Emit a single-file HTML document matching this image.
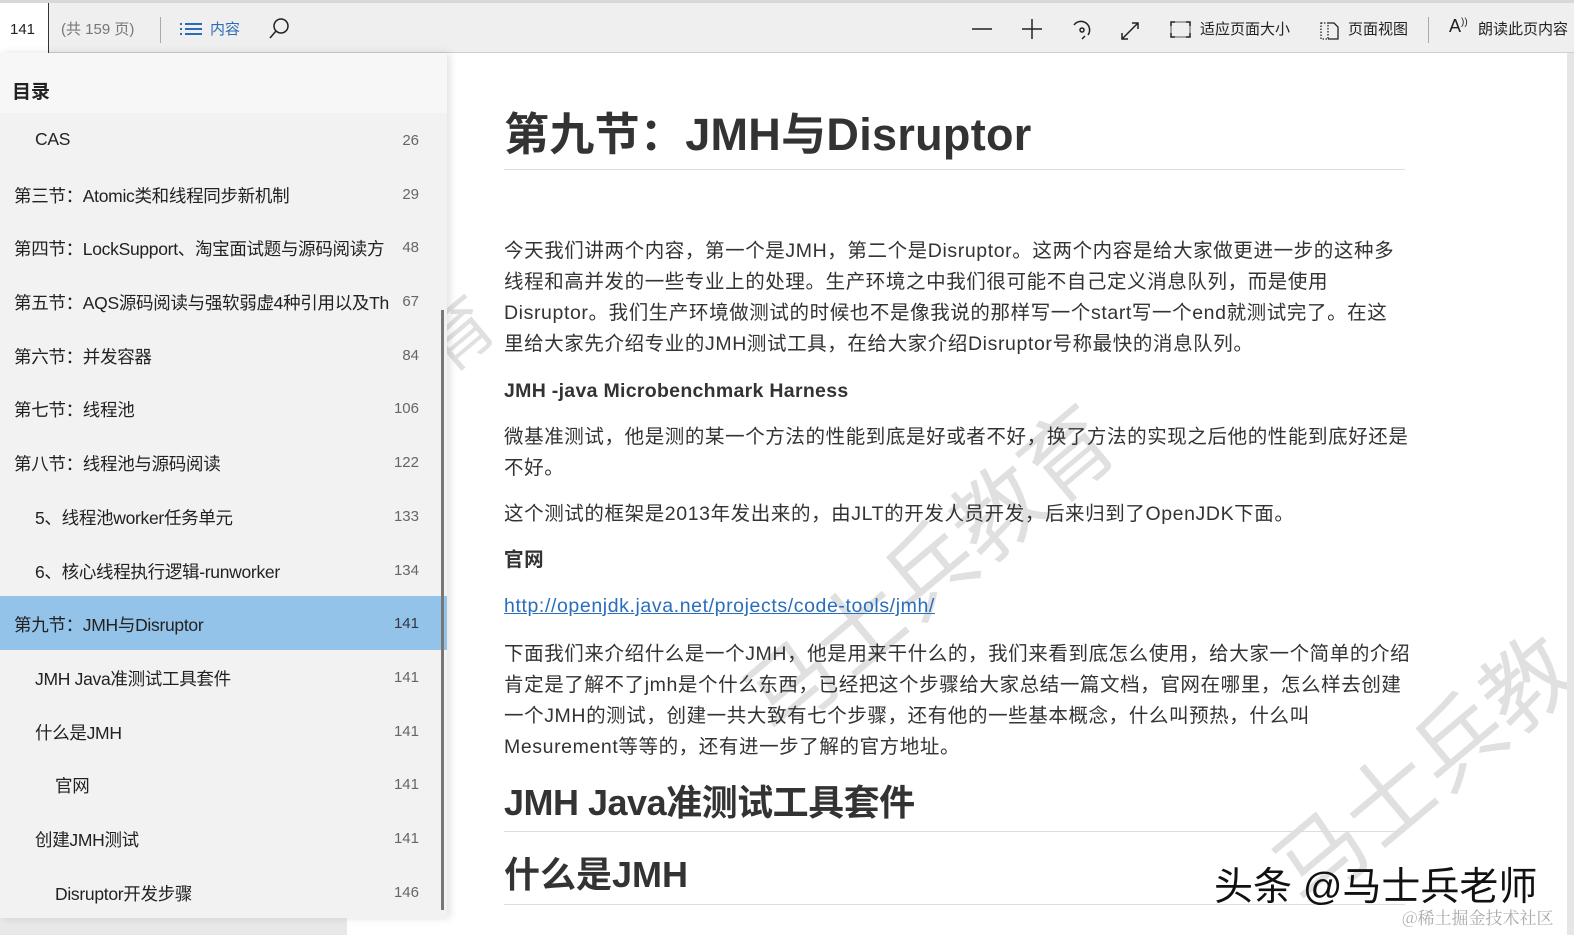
<!DOCTYPE html>
<html><head><meta charset="utf-8"><style>
*{margin:0;padding:0;box-sizing:border-box}
body{width:1574px;height:935px;overflow:hidden;background:#fff;font-family:"Liberation Sans","Noto Sans CJK SC",sans-serif;position:relative;color:#222}
.tb{position:absolute;left:0;top:0;width:1574px;height:53px;background:#efefef;border-top:3px solid #d8d8d8;border-bottom:1px solid #cfcfcf}
.tb span{position:absolute;top:15px;font-size:15px;color:#222}
.pg{position:absolute;left:0;top:0;width:49px;height:50px;background:#fff;border-right:1px solid #333;font-size:15px;padding:18px 0 0 10px}
.side{position:absolute;left:0;top:53px;width:447px;height:865px;background:#f2f2f2;box-shadow:3px 0 8px rgba(0,0,0,.12);overflow:hidden}
.side .hd{height:60px;background:#f7f7f7;font-weight:bold;font-size:19px;padding:24px 0 0 12px}
.it{height:53.7px;position:relative;font-size:17.5px;color:#222}
.it .t{position:absolute;top:16px;width:378px;overflow:hidden;white-space:nowrap;letter-spacing:-0.3px}
.it .n{position:absolute;right:28px;top:19px;font-size:15px;color:#666}
.it.sel{background:#94c3ea}
.it.sel .n{color:#334}
.sb{position:absolute;left:441px;top:257px;width:3px;height:600px;background:#777}
h1{position:absolute;left:504px;top:98px;font-size:45px;font-weight:bold;color:#333;white-space:nowrap;letter-spacing:.3px}
.hr{position:absolute;left:504px;width:901px;height:1px;background:#ddd}
.p{position:absolute;left:504px;font-size:19.5px;line-height:31px;color:#333;white-space:nowrap;letter-spacing:.6px}
.b{font-weight:bold}
.wm{position:absolute;color:#d4d4d4;font-size:90px;transform:rotate(-40deg);white-space:nowrap;opacity:.7}
</style></head><body>
<div class="wm" style="left:700px;top:500px">马士兵教育</div>
<div class="wm" style="left:1240px;top:700px">马士兵教</div>
<div class="wm" style="left:420px;top:280px;font-size:70px">育</div>
<div class="tb">
<div class="pg">141</div>
<span style="left:61px;color:#777">(共 159 页)</span>
<div style="position:absolute;left:160px;top:14px;width:1px;height:26px;background:#aaa"></div>
<svg style="position:absolute;left:180px;top:19px" width="22" height="14"><g stroke="#2b6cb5" stroke-width="2"><line x1="0" y1="2" x2="2" y2="2"/><line x1="5" y1="2" x2="22" y2="2"/><line x1="0" y1="7" x2="2" y2="7"/><line x1="5" y1="7" x2="22" y2="7"/><line x1="0" y1="12" x2="2" y2="12"/><line x1="5" y1="12" x2="22" y2="12"/></g></svg>
<span style="left:210px;color:#2b6cb5">内容</span>
<svg style="position:absolute;left:268px;top:14px" width="24" height="24"><circle cx="13" cy="9" r="7" fill="none" stroke="#222" stroke-width="1.5"/><line x1="8" y1="14" x2="2" y2="21" stroke="#222" stroke-width="1.5"/></svg>
<svg style="position:absolute;left:970px;top:14px" width="180" height="26" fill="none" stroke="#222" stroke-width="1.5"><line x1="2" y1="12" x2="22" y2="12"/><line x1="52" y1="12" x2="72" y2="12"/><line x1="62" y1="2" x2="62" y2="22"/><path d="M104 8a8 8 0 1 1 14 10"/><circle cx="112" cy="13" r="2"/><path d="M112 22l3-3"/><path d="M152 22l16-16M152 16v6h6M162 6h6v6"/></svg>
<svg style="position:absolute;left:1170px;top:18px" width="22" height="18" fill="none" stroke="#222" stroke-width="1.5"><path d="M1 5V1h4M16 1h4v4M20 12v4h-4M5 16H1v-4"/><rect x="1" y="1" width="19" height="15" stroke-width="0.7"/></svg>
<span style="left:1200px">适应页面大小</span>
<svg style="position:absolute;left:1320px;top:18px" width="22" height="20" fill="none" stroke="#222" stroke-width="1.3"><path d="M1 2h7v16H1z" stroke-dasharray="1.5 1.5"/><path d="M8 2h6l4 4v12H8"/></svg>
<span style="left:1348px">页面视图</span>
<div style="position:absolute;left:1428px;top:14px;width:1px;height:26px;background:#aaa"></div>
<span style="left:1449px;font-size:18px;top:13px">A<sup style="font-size:10px">))</sup></span>
<span style="left:1478px">朗读此页内容</span>
</div>
<div style="position:absolute;left:1567px;top:53px;width:7px;height:882px;background:#e6e6e6"></div>
<div style="position:absolute;left:0;top:918px;width:347px;height:17px;background:#e8e8e8"></div>
<div class="side">
<div class="hd">目录</div>
<div class="it"><span class="t" style="left:35px">CAS</span><span class="n">26</span></div>
<div class="it"><span class="t" style="left:14px">第三节：Atomic类和线程同步新机制</span><span class="n">29</span></div>
<div class="it"><span class="t" style="left:14px">第四节：LockSupport、淘宝面试题与源码阅读方</span><span class="n">48</span></div>
<div class="it"><span class="t" style="left:14px">第五节：AQS源码阅读与强软弱虚4种引用以及Th</span><span class="n">67</span></div>
<div class="it"><span class="t" style="left:14px">第六节：并发容器</span><span class="n">84</span></div>
<div class="it"><span class="t" style="left:14px">第七节：线程池</span><span class="n">106</span></div>
<div class="it"><span class="t" style="left:14px">第八节：线程池与源码阅读</span><span class="n">122</span></div>
<div class="it"><span class="t" style="left:35px">5、线程池worker任务单元</span><span class="n">133</span></div>
<div class="it"><span class="t" style="left:35px">6、核心线程执行逻辑-runworker</span><span class="n">134</span></div>
<div class="it sel"><span class="t" style="left:14px">第九节：JMH与Disruptor</span><span class="n">141</span></div>
<div class="it"><span class="t" style="left:35px">JMH Java准测试工具套件</span><span class="n">141</span></div>
<div class="it"><span class="t" style="left:35px">什么是JMH</span><span class="n">141</span></div>
<div class="it"><span class="t" style="left:55px">官网</span><span class="n">141</span></div>
<div class="it"><span class="t" style="left:35px">创建JMH测试</span><span class="n">141</span></div>
<div class="it"><span class="t" style="left:55px">Disruptor开发步骤</span><span class="n">146</span></div>
<div class="sb"></div>
</div>
<h1>第九节：JMH与Disruptor</h1>
<div class="hr" style="top:169px"></div>
<div class="p" style="top:236px">今天我们讲两个内容，第一个是JMH，第二个是Disruptor。这两个内容是给大家做更进一步的这种多<br>线程和高并发的一些专业上的处理。生产环境之中我们很可能不自己定义消息队列，而是使用<br>Disruptor。我们生产环境做测试的时候也不是像我说的那样写一个start写一个end就测试完了。在这<br>里给大家先介绍专业的JMH测试工具，在给大家介绍Disruptor号称最快的消息队列。</div>
<div class="p b" style="top:376px;letter-spacing:.3px">JMH -java Microbenchmark Harness</div>
<div class="p" style="top:422px">微基准测试，他是测的某一个方法的性能到底是好或者不好，换了方法的实现之后他的性能到底好还是<br>不好。</div>
<div class="p" style="top:499px">这个测试的框架是2013年发出来的，由JLT的开发人员开发，后来归到了OpenJDK下面。</div>
<div class="p b" style="top:545px">官网</div>
<div class="p" style="top:591px;color:#2a6ebb;text-decoration:underline">http://openjdk.java.net/projects/code-tools/jmh/</div>
<div class="p" style="top:639px">下面我们来介绍什么是一个JMH，他是用来干什么的，我们来看到底怎么使用，给大家一个简单的介绍<br>肯定是了解不了jmh是个什么东西，已经把这个步骤给大家总结一篇文档，官网在哪里，怎么样去创建<br>一个JMH的测试，创建一共大致有七个步骤，还有他的一些基本概念，什么叫预热，什么叫<br>Mesurement等等的，还有进一步了解的官方地址。</div>
<div class="p b" style="top:780px;font-size:36px;line-height:46px;letter-spacing:-.5px">JMH Java准测试工具套件</div>
<div class="hr" style="top:831px"></div>
<div class="p b" style="top:852px;font-size:36px;line-height:46px;letter-spacing:0">什么是JMH</div>
<div class="hr" style="top:904px"></div>
<div style="position:absolute;left:1214px;top:856px;font-size:39px;color:#111;white-space:nowrap">头条 @马士兵老师</div>
<div style="position:absolute;left:1402px;top:904px;font-size:17px;color:#aaa;font-family:'Noto Serif CJK SC',serif;white-space:nowrap">@稀土掘金技术社区</div>
</body></html>
